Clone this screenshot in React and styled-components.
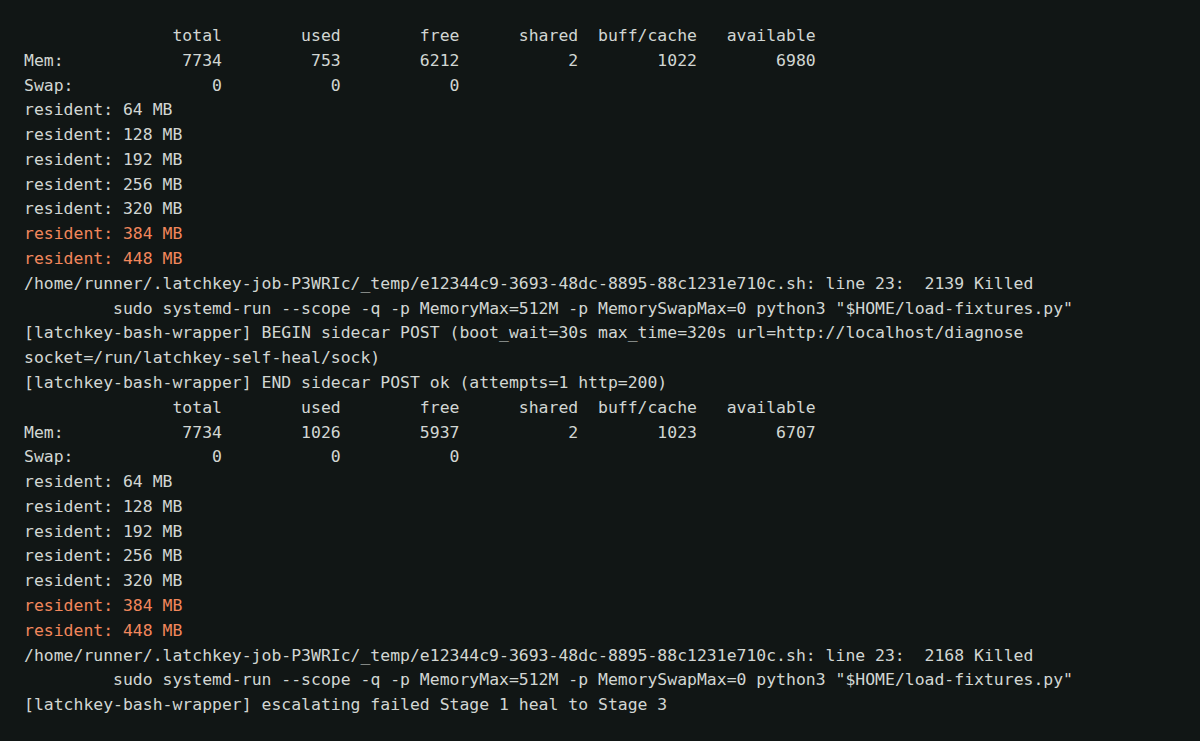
import React from "react";
import styled, { createGlobalStyle } from "styled-components";

const Global = createGlobalStyle`
  html, body { margin: 0; padding: 0; background: #111615; }
  body { width: 1200px; height: 741px; overflow: hidden; }
`;

const Terminal = styled.div`
  box-sizing: border-box;
  width: 1200px;
  min-height: 741px;
  background: #111615;
  padding: 24px 24px;
  font-family: "DejaVu Sans Mono", "Liberation Mono", monospace;
  font-size: 16.45px;
  line-height: 24.78px;
  color: #d2d6d3;
`;

const Line = styled.div`
  white-space: pre-wrap;
  color: ${(p) => (p.$warn ? "#f2875c" : "#d2d6d3")};
`;

const block = (a) => [
  { t: "               total        used        free      shared  buff/cache   available" },
  { t: a.mem },
  { t: "Swap:              0           0           0" },
  { t: "resident: 64 MB" },
  { t: "resident: 128 MB" },
  { t: "resident: 192 MB" },
  { t: "resident: 256 MB" },
  { t: "resident: 320 MB" },
  { t: "resident: 384 MB", w: true },
  { t: "resident: 448 MB", w: true },
  { t: `/home/runner/.latchkey-job-P3WRIc/_temp/e12344c9-3693-48dc-8895-88c1231e710c.sh: line 23:  ${a.pid} Killed` },
  { t: '         sudo systemd-run --scope -q -p MemoryMax=512M -p MemorySwapMax=0 python3 "$HOME/load-fixtures.py"' },
];

const lines = [
  ...block({ mem: "Mem:            7734         753        6212           2        1022        6980", pid: "2139" }),
  { t: "[latchkey-bash-wrapper] BEGIN sidecar POST (boot_wait=30s max_time=320s url=http://localhost/diagnose socket=/run/latchkey-self-heal/sock)" },
  { t: "[latchkey-bash-wrapper] END sidecar POST ok (attempts=1 http=200)" },
  ...block({ mem: "Mem:            7734        1026        5937           2        1023        6707", pid: "2168" }),
  { t: "[latchkey-bash-wrapper] escalating failed Stage 1 heal to Stage 3" },
];

export default function App() {
  return (
    <>
      <Global />
      <Terminal>
        {lines.map((l, i) => (
          <Line key={i} $warn={l.w}>
            {l.t}
          </Line>
        ))}
      </Terminal>
    </>
  );
}
